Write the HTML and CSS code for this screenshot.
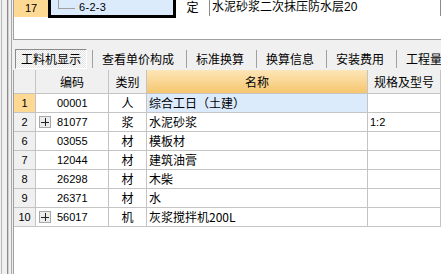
FILE: index.html
```html
<!DOCTYPE html>
<html lang="zh-CN">
<head>
<meta charset="utf-8">
<title>工料机显示</title>
<link rel="stylesheet" href="styles.css">
</head>
<body>
<div class="app">
  <div class="gutter"></div>
  <div class="main">
    <div class="upper">
      <div class="trow">
        <div class="tnum">17</div>
        <div class="tcode"><span class="tree"></span><span class="tcode-text">6-2-3</span></div>
        <div class="ttype">定</div>
        <div class="tname">水泥砂浆二次抹压防水层20</div>
      </div>
    </div>
    <div class="tabs">
      <div class="tab active">工料机显示</div>
      <div class="sep"></div>
      <div class="tab">查看单价构成</div>
      <div class="sep"></div>
      <div class="tab">标准换算</div>
      <div class="sep"></div>
      <div class="tab">换算信息</div>
      <div class="sep"></div>
      <div class="tab">安装费用</div>
      <div class="sep"></div>
      <div class="tab">工程量明细</div>
    </div>
    <div class="grid">
      <div class="hd num"></div>
      <div class="hd">编码</div>
      <div class="hd">类别</div>
      <div class="hd hl">名称</div>
      <div class="hd">规格及型号</div>

      <div class="c num cur">1</div>
      <div class="c code"><span class="slot"></span>00001</div>
      <div class="c type">人</div>
      <div class="c name sel">综合工日（土建）</div>
      <div class="c spec"></div>

      <div class="c num">2</div>
      <div class="c code"><span class="slot plus"></span>81077</div>
      <div class="c type">浆</div>
      <div class="c name">水泥砂浆</div>
      <div class="c spec">1:2</div>

      <div class="c num">6</div>
      <div class="c code"><span class="slot"></span>03055</div>
      <div class="c type">材</div>
      <div class="c name">模板材</div>
      <div class="c spec"></div>

      <div class="c num">7</div>
      <div class="c code"><span class="slot"></span>12044</div>
      <div class="c type">材</div>
      <div class="c name">建筑油膏</div>
      <div class="c spec"></div>

      <div class="c num">8</div>
      <div class="c code"><span class="slot"></span>26298</div>
      <div class="c type">材</div>
      <div class="c name">木柴</div>
      <div class="c spec"></div>

      <div class="c num">9</div>
      <div class="c code"><span class="slot"></span>26371</div>
      <div class="c type">材</div>
      <div class="c name">水</div>
      <div class="c spec"></div>

      <div class="c num">10</div>
      <div class="c code"><span class="slot plus"></span>56017</div>
      <div class="c type">机</div>
      <div class="c name">灰浆搅拌机200L</div>
      <div class="c spec"></div>
    </div>
  </div>
</div>
</body>
</html>
```

FILE: styles.css
```css
* { box-sizing: border-box; }
html, body { margin: 0; padding: 0; }
body {
  width: 441px;
  height: 274px;
  overflow: hidden;
  background: #f0f0f0;
  font-family: "Liberation Sans", "Noto Sans CJK SC", sans-serif;
  font-size: 12px;
  color: #000;
}
.app {
  display: flex;
  height: 274px;
}
.gutter {
  width: 13px;
  flex-shrink: 0;
  background:
    linear-gradient(90deg,
      #f0f0f0 0 1px, #b9b9b9 1px 2px, #f0f0f0 2px 7px,
      #8a8a8a 7px 8px, #d0d0d0 8px 9px, #f0f0f0 9px 11px,
      #a8a8a8 11px 12px, #f0f0f0 12px 13px);
}
.main {
  flex: 1;
  min-width: 0;
  display: flex;
  flex-direction: column;
  overflow: hidden;
}

/* upper tree grid */
.upper {
  height: 40px;
  flex-shrink: 0;
  background: #fff;
  border-left: 1px solid #a0a0a0;
  border-bottom: 1px solid #a0a0a0;
}
.trow {
  display: flex;
  height: 18px;
}
.tnum {
  width: 34px;
  height: 17px;
  background: #fdd993;
  text-align: center;
  line-height: 16px;
  font-size: 11px;
}
.tcode {
  width: 128px;
  height: 18px;
  background: #dcebfc;
  border: 3px solid #000;
  border-top: 0;
  display: flex;
  align-items: flex-start;
  padding-left: 7px;
}
.tree {
  width: 17px;
  height: 9px;
  border-left: 1px solid #a0a0a0;
  border-bottom: 1px solid #a0a0a0;
  flex-shrink: 0;
}
.tcode-text {
  margin-left: 4px;
  font-size: 11px;
  line-height: 15px;
  letter-spacing: 0.3px;
}
.ttype {
  width: 34px;
  height: 16px;
  text-align: center;
  line-height: 16px;
  border-right: 1px solid #8c8c8c;
}
.tname {
  width: 231px;
  height: 16px;
  line-height: 15px;
  padding-left: 2px;
  border-right: 1px solid #8c8c8c;
  white-space: nowrap;
  flex-shrink: 0;
}

/* tab bar */
.tabs {
  height: 30px;
  flex-shrink: 0;
  display: flex;
  align-items: flex-end;
  padding: 0 0 1px 2px;
  white-space: nowrap;
  overflow: hidden;
  background: #f0f0f0;
  font-family: "Noto Sans CJK SC", sans-serif;
}
.tab {
  flex-shrink: 0;
  height: 20px;
  line-height: 20px;
  padding: 0 12px 0 9px;
}
.tab.active {
  line-height: 18px;
  padding: 0 5px;
  margin-right: 5px;
  border: 1px solid;
  border-color: #8a8a8a #ffffff #ffffff #8a8a8a;
  background: repeating-conic-gradient(#ffffff 0 25%, #e2e2e2 0 50%) 0 0 / 2px 2px;
}
.sep {
  flex-shrink: 0;
  width: 1px;
  height: 18px;
  margin-bottom: 1px;
  background: #a0a0a0;
}

/* detail grid */
.grid {
  flex: 1;
  background: #fff;
  border-left: 1px solid #a0a0a0;
  display: grid;
  grid-template-columns: 22px 73px 38px 221px 73px;
  grid-auto-rows: 19px;
  grid-template-rows: 24px;
  align-content: start;
}
.hd {
  background: #f0f0f0;
  border-right: 1px solid #c4c4c4;
  border-bottom: 1px solid #c4c4c4;
  text-align: center;
  line-height: 23px;
  white-space: nowrap;
  overflow: hidden;
  font-family: "Noto Sans CJK SC", sans-serif;
}
.hd.hl {
  background: linear-gradient(#fde6b8, #f5c66f);
}
.c {
  border-right: 1px solid #c4c4c4;
  border-bottom: 1px solid #c4c4c4;
  line-height: 18px;
  white-space: nowrap;
  overflow: hidden;
}
.num {
  background: #f0f0f0;
  text-align: center;
  font-size: 11px;
}
.num.cur { background: #fdd993; }
.code {
  display: flex;
  align-items: center;
  padding-left: 3px;
  font-size: 11px;
}
.slot {
  width: 12px;
  height: 12px;
  margin-right: 6px;
  flex-shrink: 0;
}
.slot.plus {
  border: 1px solid #a8a8a8;
  background:
    linear-gradient(#222, #222) center / 8px 1px no-repeat,
    linear-gradient(#222, #222) center / 1px 8px no-repeat,
    #ececec;
}
.type {
  text-align: center;
  font-family: "Noto Sans CJK SC", sans-serif;
}
.name {
  padding-left: 2px;
  font-family: "Noto Sans CJK SC", sans-serif;
}
.name.sel { background: #dcebfc; }
.spec {
  padding-left: 2px;
  font-size: 11px;
}
```
